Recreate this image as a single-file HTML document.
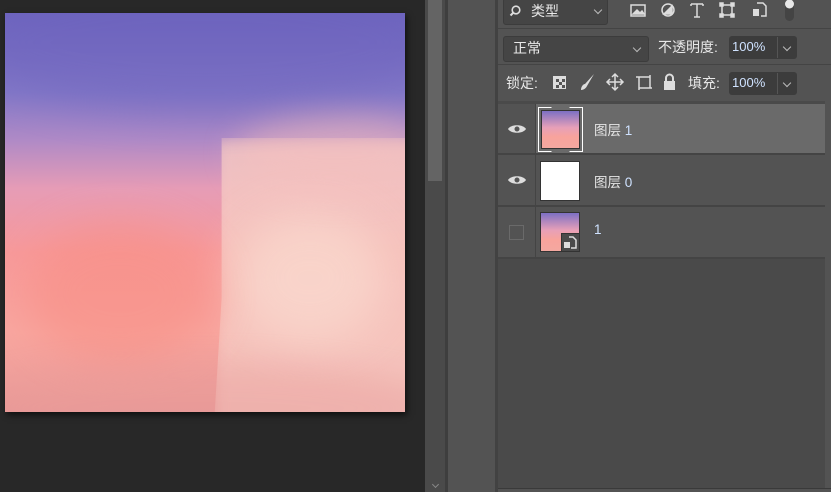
<!DOCTYPE html>
<html><head><meta charset="utf-8">
<style>
*{margin:0;padding:0;box-sizing:border-box}
body{width:831px;height:492px;overflow:hidden;background:#282828;font-family:"Liberation Sans","Noto Sans CJK SC",sans-serif;position:relative;color:#ddd}
.abs{position:absolute}
#img{left:5px;top:13px;width:400px;height:399px;overflow:hidden;box-shadow:2px 3px 6px rgba(0,0,0,.6);
background:linear-gradient(180deg,#6f66c0 0%,#8479c8 20%,#b08ac6 32%,#e69cb6 44%,#f7999a 60%,#f8a69f 80%,#e99a98 100%)}
.blob{position:absolute;border-radius:50%;filter:blur(12px)}
.sel{font-size:13px;color:#e8e8e8}
.box{background:#454545;border:1px solid #3c3c3c;border-radius:3px}
.txt{font-size:13.5px;color:#e6e6e6}
.num{color:#cfe2ff}
.chev{position:absolute;width:6px;height:6px;border-right:1px solid #bbb;border-bottom:1px solid #bbb;transform:rotate(45deg)}
</style></head><body>
<div id="img" class="abs">
  <div class="blob" style="left:207px;top:125px;width:240px;height:320px;border-radius:0;background:#f6cbc4;filter:blur(8px);opacity:.8;clip-path:polygon(4% 0,100% 0,100% 100%,0 100%,4% 50%)"></div>
  <div class="blob" style="left:230px;top:200px;width:150px;height:130px;background:#fadbd0;filter:blur(22px);opacity:.7"></div>
  <div class="blob" style="left:230px;top:100px;width:200px;height:80px;background:#f7c0bc;opacity:.5;filter:blur(16px)"></div>
  <div class="blob" style="left:20px;top:210px;width:190px;height:140px;background:#f88e84;opacity:.55;filter:blur(20px)"></div>
  <div class="blob" style="left:-40px;top:-40px;width:480px;height:140px;background:#6a60bb;opacity:.4;filter:blur(20px)"></div>
  <div class="blob" style="left:-40px;top:350px;width:480px;height:90px;background:#e89a98;opacity:.4;filter:blur(16px)"></div>
</div>
<div class="abs" style="left:425px;top:0;width:20px;height:492px;background:#4a4a4a"></div>
<div class="abs" style="left:428px;top:0;width:14px;height:181px;background:#646464"></div>
<div class="chev" style="left:433px;top:482px;width:5px;height:5px;border-color:#888"></div>
<div class="abs" style="left:445px;top:0;width:3px;height:492px;background:#3e3e3e"></div>
<div class="abs" style="left:448px;top:0;width:47px;height:492px;background:#535353"></div>
<div class="abs" style="left:495px;top:0;width:3px;height:492px;background:#424242"></div>
<div class="abs" style="left:498px;top:0;width:333px;height:492px;background:#535353"></div>
<div class="abs" style="left:498px;top:28px;width:333px;height:1px;background:#444"></div>
<div class="abs" style="left:498px;top:64px;width:333px;height:1px;background:#444"></div>
<div class="abs box" style="left:503px;top:-2px;width:105px;height:27px"></div>
<svg class="abs" style="left:509px;top:4px" width="14" height="14"><circle cx="7" cy="6" r="3.8" stroke="#ddd" stroke-width="1.6" fill="none"/><path d="M4.5 8.5L1.5 11.5" stroke="#ddd" stroke-width="2"/></svg>
<div class="abs sel" style="left:531px;top:1px;font-size:14px">类型</div>
<div class="chev" style="left:595px;top:7px"></div>
<svg class="abs" style="left:628px;top:0" width="175" height="24" fill="none" stroke="#ddd" stroke-width="1.5">
 <rect x="3" y="5" width="14" height="11"/><path d="M5 14l4-4 3 3 2-2 2 3z" fill="#ddd"/>
 <circle cx="40" cy="10" r="6"/><path d="M36 14l8-8v8z" fill="#ddd"/>
 <path d="M63 4h12M69 4v13M66 17h6M63 4v2M75 4v2"/>
 <rect x="94" y="5" width="10" height="10"/><rect x="92" y="3" width="3" height="3" fill="#ddd"/><rect x="103" y="3" width="3" height="3" fill="#ddd"/><rect x="92" y="14" width="3" height="3" fill="#ddd"/><rect x="103" y="14" width="3" height="3" fill="#ddd"/>
 <path d="M129 3h6l3 3v10h-5"/><rect x="125" y="9" width="6" height="7" fill="#ddd" stroke="none"/>
 <rect x="157" y="1" width="9" height="20" rx="4.5" fill="#444" stroke="none"/><circle cx="161.5" cy="4" r="4.5" fill="#e8e8e8" stroke="none"/>
</svg>
<div class="abs box" style="left:503px;top:36px;width:146px;height:26px"></div>
<div class="abs sel" style="left:513px;top:38px;font-size:14px">正常</div>
<div class="chev" style="left:634px;top:45px"></div>
<div class="abs sel" style="left:658px;top:37px;font-size:14px">不透明度:</div>
<div class="abs" style="left:729px;top:36px;width:68px;height:23px;background:#3c3c3c;border-radius:3px"></div>
<div class="abs" style="left:777px;top:37px;width:1px;height:21px;background:#555"></div>
<div class="abs num" style="left:732px;top:39px;font-size:13px">100%</div>
<div class="chev" style="left:784px;top:44px"></div>
<div class="abs sel" style="left:506px;top:73px;font-size:14px">锁定:</div>
<svg class="abs" style="left:550px;top:72px" width="135" height="20">
 <rect x="3" y="4" width="13" height="13" fill="#ddd"/><rect x="6" y="7" width="3" height="3" fill="#555"/><rect x="12" y="7" width="3" height="3" fill="#555"/><rect x="9" y="10" width="3" height="3" fill="#555"/><rect x="6" y="13" width="3" height="3" fill="#555"/><rect x="12" y="13" width="3" height="3" fill="#555"/>
 <path d="M31 18c0-3 2-6 4-6l9-10-7 12c-1 2-3 4-6 4z" fill="#ddd"/>
 <path d="M65 2v16M57 10h16M62 5l3-3 3 3M62 15l3 3 3-3M60 7l-3 3 3 3M70 7l3 3-3 3" stroke="#ddd" stroke-width="1.5" fill="none"/>
 <path d="M88 5h12v11h-11V5M86 5h4M98 16h4M100 3v4M89 14v4" stroke="#ddd" stroke-width="1.5" fill="none"/>
 <rect x="114" y="9" width="11" height="9" fill="#ddd"/><path d="M116 9V6a3.5 3.5 0 0 1 7 0v3" stroke="#ddd" stroke-width="2" fill="none"/>
</svg>
<div class="abs sel" style="left:688px;top:73px;font-size:14px">填充:</div>
<div class="abs" style="left:729px;top:72px;width:68px;height:23px;background:#3c3c3c;border-radius:3px"></div>
<div class="abs" style="left:777px;top:73px;width:1px;height:21px;background:#555"></div>
<div class="abs num" style="left:732px;top:75px;font-size:13px">100%</div>
<div class="chev" style="left:784px;top:80px"></div>
<div class="abs" style="left:498px;top:101px;width:327px;height:388px;background:#4a4a4a"></div>
<div class="abs" style="left:825px;top:101px;width:6px;height:391px;background:#535353"></div>
<div class="abs" style="left:498px;top:488px;width:333px;height:1px;background:#3a3a3a"></div>
<div class="abs" style="left:498px;top:104px;width:327px;height:49px;background:#6a6a6a"></div>
<div class="abs" style="left:498px;top:155px;width:327px;height:50px;background:#535353"></div>
<div class="abs" style="left:498px;top:207px;width:327px;height:50px;background:#535353"></div>
<div class="abs" style="left:498px;top:104px;width:37px;height:153px;background:#535353"></div>
<div class="abs" style="left:535px;top:104px;width:1px;height:153px;background:#444"></div>
<div class="abs" style="left:498px;top:153px;width:327px;height:2px;background:#444"></div>
<div class="abs" style="left:498px;top:205px;width:327px;height:2px;background:#444"></div>
<div class="abs" style="left:498px;top:257px;width:327px;height:2px;background:#444"></div>
<svg class="abs" style="left:507px;top:123px" width="20" height="12"><path d="M1 6c3-5 15-5 18 0c-3 5-15 5-18 0z" fill="#ddd"/><circle cx="10" cy="6" r="2.5" fill="#555"/></svg>
<svg class="abs" style="left:507px;top:174px" width="20" height="12"><path d="M1 6c3-5 15-5 18 0c-3 5-15 5-18 0z" fill="#ddd"/><circle cx="10" cy="6" r="2.5" fill="#555"/></svg>
<div class="abs" style="left:509px;top:225px;width:15px;height:15px;border:1px solid #6a6a6a"></div>
<div class="abs" style="left:538px;top:107px;width:45px;height:45px;border:1px solid #fff;clip-path:polygon(0 0,30% 0,30% 4%,70% 4%,70% 0,100% 0,100% 100%,70% 100%,70% 96%,30% 96%,30% 100%,0 100%)"></div>
<div class="abs" style="left:541px;top:110px;width:39px;height:39px;border:1px solid #333;background:linear-gradient(180deg,#7d70c4,#e7a0b8 45%,#f8a39c 70%,#f4a8a0)"></div>
<div class="abs" style="left:540px;top:161px;width:40px;height:40px;border:1px solid #333;background:#fff"></div>
<div class="abs" style="left:540px;top:212px;width:40px;height:40px;border:1px solid #333;background:linear-gradient(180deg,#7d70c4,#e7a0b8 45%,#f8a39c 70%,#f4a8a0)"></div>
<div class="abs" style="left:561px;top:233px;width:19px;height:19px;background:#4a4a4a;border:1px solid #333"></div>
<svg class="abs" style="left:563px;top:235px" width="15" height="15"><rect x="1" y="7" width="6" height="6" fill="#ddd"/><path d="M6 2h4l3 3v8H8" stroke="#ddd" stroke-width="1.5" fill="none"/></svg>
<div class="abs txt" style="left:594px;top:119px">图层 <span class="num">1</span></div>
<div class="abs txt" style="left:594px;top:171px">图层 <span class="num">0</span></div>
<div class="abs txt num" style="left:594px;top:222px">1</div>
</body></html>
